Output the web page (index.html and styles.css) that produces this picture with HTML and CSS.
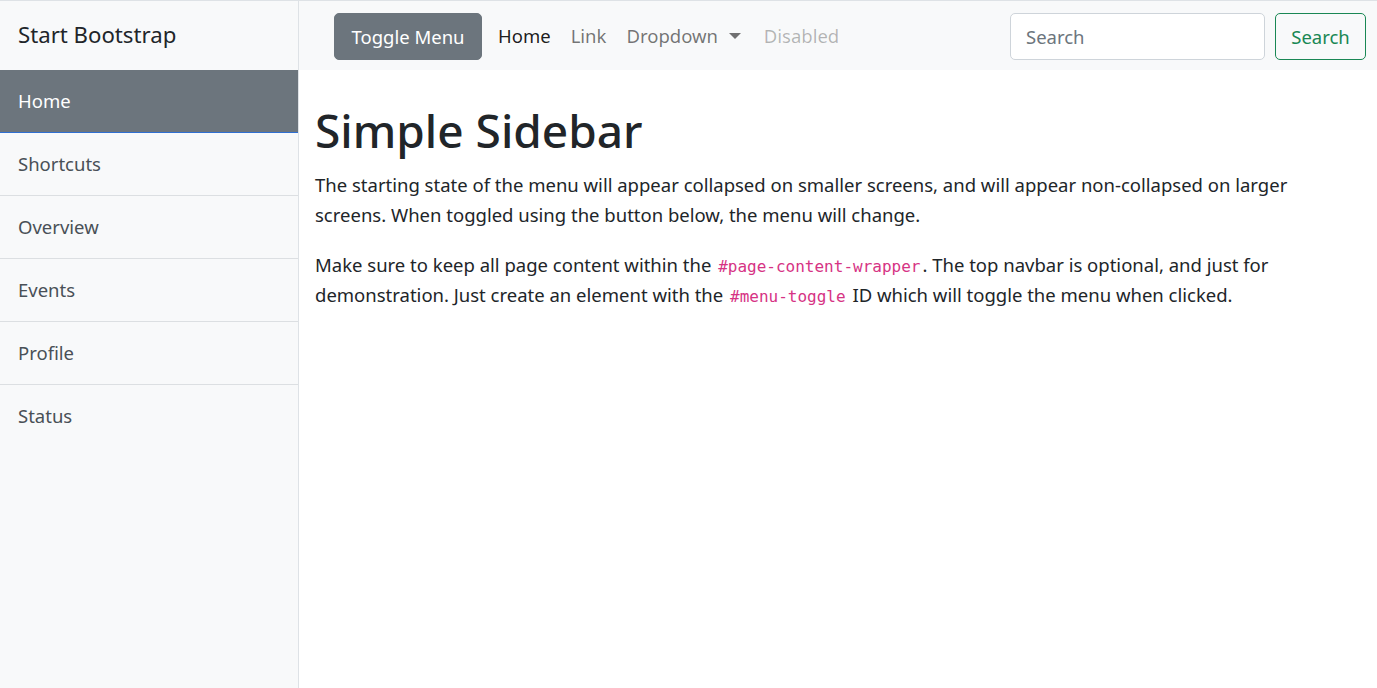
FILE: index.html
```html
<!DOCTYPE html>
<html lang="en">
<head>
<meta charset="UTF-8" />
<meta name="viewport" content="width=device-width, initial-scale=1" />
<title>Simple Sidebar - Start Bootstrap</title>
<link rel="stylesheet" href="styles.css">
</head>
<body>

<div class="wrapper">
  <!-- sidebar -->
  <div class="sidebar">
    <div class="sidebar-heading">Start Bootstrap</div>
    <div class="list-group">
      <a href="#" class="list-item active">Home</a>
      <a href="#" class="list-item">Shortcuts</a>
      <a href="#" class="list-item">Overview</a>
      <a href="#" class="list-item">Events</a>
      <a href="#" class="list-item">Profile</a>
      <a href="#" class="list-item last">Status</a>
    </div>
  </div>

  <!-- page content -->
  <div class="page-content">
    <nav class="navbar">
      <button class="btn-toggle" id="menu-toggle">Toggle Menu</button>
      <ul class="nav">
        <li><a href="#" class="nav-link current">Home</a></li>
        <li><a href="#" class="nav-link">Link</a></li>
        <li><a href="#" class="nav-link dropdown">Dropdown <span class="caret"></span></a></li>
        <li><a href="#" class="nav-link disabled">Disabled</a></li>
      </ul>
      <form class="search-form">
        <input type="search" class="search-input" placeholder="Search">
        <button type="button" class="btn-search">Search</button>
      </form>
    </nav>

    <div class="container">
      <h1>Simple Sidebar</h1>
      <p>The starting state of the menu will appear collapsed on smaller screens, and will appear non-collapsed on larger screens. When toggled using the button below, the menu will change.</p>
      <p>Make sure to keep all page content within the <code>#page-content-wrapper</code>. The top navbar is optional, and just for demonstration. Just create an element with the <code>#menu-toggle</code> ID which will toggle the menu when clicked.</p>
    </div>
  </div>
</div>

</body>
</html>
```

FILE: styles.css
```css
body {
  margin: 0;
  font-family: 'Segoe UI', 'Noto Sans', 'Open Sans', sans-serif;
  font-size: 18.5px;
  line-height: 30px;
  color: #212529;
  background: #fff;
}
a {
  text-decoration: none;
}
.wrapper {
  display: flex;
  min-height: 687px;
  border-top: 1px solid #dee2e6;
}
.sidebar {
  width: 298px;
  flex-shrink: 0;
  background: #f8f9fa;
  border-right: 1px solid #dee2e6;
}
.sidebar-heading {
  height: 69px;
  line-height: 68px;
  padding-left: 18px;
  font-size: 22.2px;
  color: #212529;
}
.list-item {
  display: block;
  padding: 16px 18px;
  line-height: 30px;
  color: #495057;
  border-bottom: 1px solid #dcdfe2;
}
.list-item.active {
  background: #6c757d;
  color: #fff;
  border-bottom: 1px solid #2f6fd1;
}
.list-item.last {
  border-bottom: none;
}
.page-content {
  flex: 1;
}
.navbar {
  display: flex;
  align-items: center;
  height: 69px;
  padding: 1px 11px 0 35px;
  box-sizing: border-box;
  background: #f8f9fa;
}
.btn-toggle {
  height: 47px;
  width: 148px;
  padding: 0;
  font-family: inherit;
  font-size: 18.5px;
  color: #fff;
  background: #6c757d;
  border: 1px solid #6c757d;
  border-radius: 5px;
}
.nav {
  display: flex;
  list-style: none;
  margin: 0 0 0 6px;
  padding: 0;
}
.nav-link {
  display: block;
  padding: 0 10px;
  line-height: 30px;
  color: rgba(0, 0, 0, 0.55);
}
.nav-link.current {
  color: rgba(0, 0, 0, 0.9);
}
.nav-link.disabled {
  color: rgba(0, 0, 0, 0.28);
  padding-left: 13px;
}
.caret {
  display: inline-block;
  margin-left: 6px;
  vertical-align: 4px;
  border-top: 6px solid;
  border-left: 6px solid transparent;
  border-right: 6px solid transparent;
}
.search-form {
  display: flex;
  margin-left: auto;
  gap: 10px;
}
.search-input {
  width: 255px;
  height: 47px;
  box-sizing: border-box;
  padding: 0 15px;
  font-family: inherit;
  font-size: 18.5px;
  color: #212529;
  background: #fff;
  border: 1px solid #ced4da;
  border-radius: 5px;
}
.search-input::placeholder {
  color: #6c757d;
}
.btn-search {
  height: 47px;
  width: 91px;
  padding: 0;
  font-family: inherit;
  font-size: 18.5px;
  color: #198754;
  background: transparent;
  border: 1px solid #198754;
  border-radius: 5px;
}
.container {
  padding: 0 15px 0 16px;
}
h1 {
  margin: 30px 0 10px;
  font-size: 46px;
  font-weight: 500;
  line-height: 60px;
}
p {
  margin: 0 0 20px;
}
code {
  margin: 0 2px;
  font-family: 'DejaVu Sans Mono', 'Liberation Mono', monospace;
  font-size: 16px;
  line-height: 1;
  color: #d63384;
}
```
